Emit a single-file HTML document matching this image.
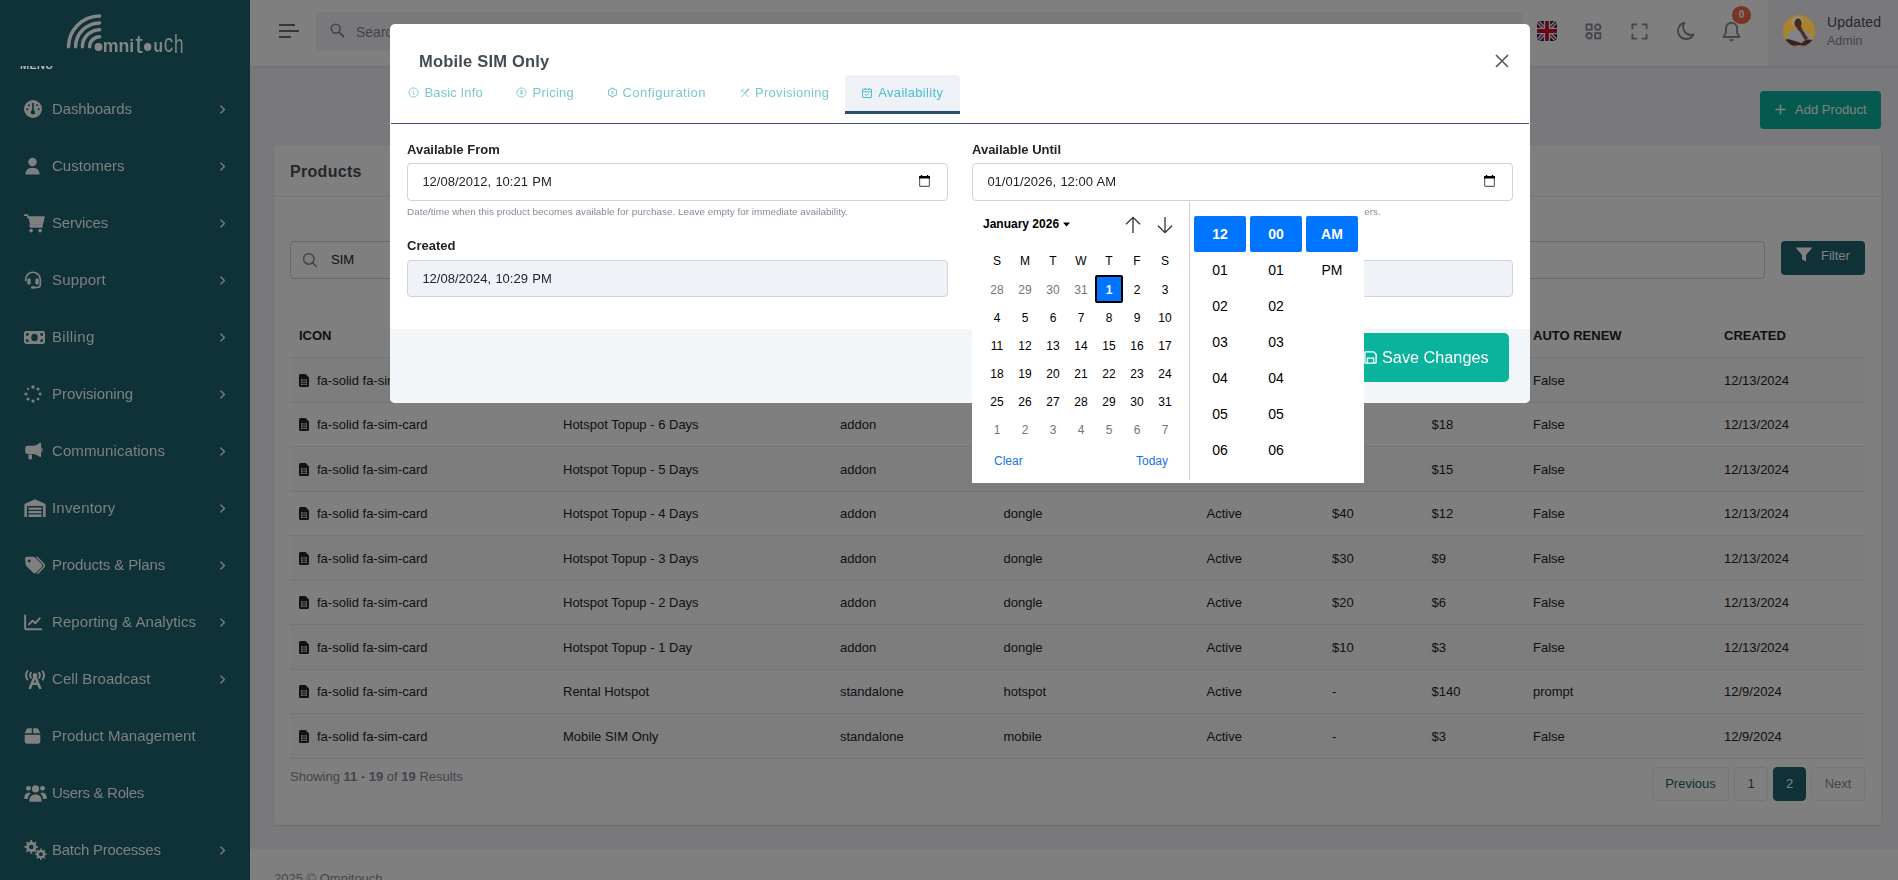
<!DOCTYPE html>
<html lang="en"><head><meta charset="utf-8"><title>Products | Omnitouch</title>
<style>
*{box-sizing:border-box}
html,body{margin:0;padding:0}
body{width:1898px;height:880px;overflow:hidden;position:relative;background:#f3f3f9;font-family:"Liberation Sans",sans-serif;font-size:13px;color:#212529;line-height:1.500}
.abs{position:absolute;white-space:nowrap}
#side{position:absolute;left:0;top:0;width:250px;height:880px;background:#0e3238;overflow:hidden;will-change:transform}
.logo{position:absolute;left:55px;top:5px}
.mt{position:absolute;left:20px;top:57.100px;font-size:11px;font-weight:700;color:#b8bebe;letter-spacing:.3px}
.logobox{position:absolute;left:0;top:0;width:250px;height:66px;background:#0e3238}
.mi{position:absolute;left:0;width:250px;height:28px;color:#808080;font-size:15px;line-height:28px}
.mi .ic{position:absolute;left:24px;top:0;width:26px;height:28px;display:flex;align-items:center;justify-content:flex-start}
.mi .ml{position:absolute;left:52px;top:0;letter-spacing:-.05px}
.mi .ch{position:absolute;left:216px;top:0;height:28px;display:flex;align-items:center}
#top{position:absolute;left:250px;top:0;width:1648px;height:66px;background:#fff;box-shadow:0 1px 2px rgba(56,65,74,.15)}
.search{left:316px;top:12px;width:1206px;height:38px;background:#f3f3f9;border-radius:4px}
.badge{left:1732px;top:6.400px;width:19px;height:17.600px;border-radius:9.500px/8.800px;background:#f5694b;color:#fff;font-size:10px;font-weight:700;line-height:17.600px;text-align:center}
.userbg{left:1768px;top:0;width:130px;height:66px;background:#f3f3f9}
.btn-add{left:1760px;top:91px;width:121px;height:38px;background:#0ab39c;border-radius:4px;color:#fff;font-size:13px;line-height:38px}
#card{position:absolute;left:274px;top:145px;width:1607px;height:680px;background:#fff;border-radius:4px;box-shadow:0 1px 2px rgba(56,65,74,.15)}
.ct{left:290px;top:159.500px;font-size:16px;font-weight:700;color:#495057;letter-spacing:.3px}
.chb{left:274px;top:196px;width:1607px;height:1px;background:#e9ebec}
.sinput{left:290px;top:241px;width:1475px;height:38px;border:1px solid #ced4da;border-radius:4px;background:#fff}
.btn-f{left:1781px;top:241px;width:84px;height:34px;background:#1c6470;border-radius:4px;color:#fff;font-size:13px;line-height:29px}
.thead{border-bottom:1px solid #e9ebec}
.th{font-weight:700;font-size:13px;color:#212529}
.tr{left:290px;width:1575px;height:44.500px;border-bottom:1px solid #e9ebec}
.tr.odd{background:rgba(0,0,0,.02)}
.td{font-size:13px;color:#212529}
.pg{top:767px;height:34px;border:1px solid #e9ebec;border-radius:4px;font-size:13px;line-height:32px;text-align:center;color:#1c6470;background:#fff}
#foot{position:absolute;left:250px;top:849px;width:1648px;height:60px;background:#fff}
#bd{position:absolute;left:0;top:0;width:1898px;height:880px;background:rgba(0,0,0,.5)}
#ml{position:absolute;left:0;top:0;width:1898px;height:880px;will-change:transform}
#modal{position:absolute;left:390px;top:24px;width:1140px;height:379px;background:#fff;border-radius:5px;overflow:hidden}
.mtitle{left:419px;top:49px;font-size:16.500px;font-weight:700;color:#434b54;line-height:24px;letter-spacing:.2px}
.tab{top:75px;height:39px;font-size:13px;color:#7cc6d2;line-height:19.500px}
.tab .ti{top:12px}
.tab .tt{top:8px}
.tab.act{background:#eef2f7;border-bottom:3px solid #264f6c;color:#4bbcd2;border-radius:4px 4px 0 0}
.mline{left:391px;top:123px;width:1138px;height:1px;background:#405189}
.lbl{font-weight:700;font-size:13px;color:#212529}
.inp{word-spacing:.7px;height:38px;width:541px;border:1px solid #ced4da;border-radius:4px;background:#fff;font-size:13px;line-height:36px;padding-left:14.400px;color:#212529}
.inp.dis{background:#eff2f7}
.inp svg{position:absolute;right:17.500px;top:11px}
.help{font-size:9.920px;color:#878a99}
.mfoot{left:390px;top:329px;width:1140px;height:74px;background:#f3f6f9;border-radius:0 0 5px 5px}
.btn-save{left:1340px;top:333px;width:169px;height:49px;background:#0ab39c;border-radius:5px;color:#fff;font-size:16.250px;line-height:49px}
#pick{position:absolute;left:972px;top:201px;width:392px;height:282px;background:#fff}
.wd{width:28px;text-align:center;font-size:12px;line-height:28px;color:#000}
.dy{width:28px;height:28px;text-align:center;font-size:12px;line-height:28px;color:#000}
.dy.om{color:#757575}
.dy i{font-style:normal;position:relative;top:1px}
.dy.sel{background:#0075ff;color:#fff;font-weight:700;border:2px solid #000;border-radius:2px;line-height:24px}
.tc{width:52px;height:36px;text-align:center;font-size:14px;line-height:36px;color:#000;border-radius:2px}
.tc.sel{background:#0075ff;color:#fff;font-weight:700}
</style></head><body>
<div id="top"></div>

<svg class="abs" style="left:278px;top:23px" width="22" height="16" viewBox="0 0 22 16"><g fill="none" stroke="#6b6f80" stroke-width="2" stroke-linecap="butt"><path d="M1 2h16M1 8h20M1 14h12"/></g></svg>
<div class="abs search"><svg width="17" height="17" viewBox="0 0 24 24" class="abs" style="left:13px;top:10px"><circle cx="9.500" cy="9.500" r="6.200" fill="none" stroke="#878a99" stroke-width="2.200"/><path d="M14.200 14.200l6.300 6.300" stroke="#878a99" stroke-width="2.600" stroke-linecap="round"/></svg><span class="abs" style="left:40px;top:9.500px;font-size:14px;color:#878a99">Search...</span></div>
<svg class="abs" style="left:1537px;top:21px;border-radius:4px" width="20" height="20" viewBox="0 0 20 20"><rect width="20" height="20" fill="#012169"/><path d="M0 0l20 20M20 0L0 20" stroke="#fff" stroke-width="4"/><path d="M0 0l20 20M20 0L0 20" stroke="#c8102e" stroke-width="1.500"/><path d="M10 0v20M0 10h20" stroke="#fff" stroke-width="6.400"/><path d="M10 0v20M0 10h20" stroke="#c8102e" stroke-width="3.800"/></svg>
<svg class="abs" style="left:1584.500px;top:23.200px" width="17" height="17" viewBox="0 0 18 18"><g fill="none" stroke="#878a99" stroke-width="1.900"><rect x="1.500" y="1.500" width="5.600" height="5.600"/><circle cx="13.500" cy="4.300" r="2.900"/><circle cx="4.300" cy="13.500" r="2.900"/><rect x="10.700" y="10.700" width="5.600" height="5.600"/></g></svg>
<svg class="abs" style="left:1630.500px;top:23.200px" width="17" height="17" viewBox="0 0 18 18"><g fill="none" stroke="#878a99" stroke-width="1.900"><path d="M1.500 6.500v-5h5M11.500 1.500h5v5M16.500 11.500v5h-5M6.500 16.500h-5v-5"/></g></svg>
<svg class="abs" style="left:1675px;top:21px" width="20" height="20" viewBox="0 0 20 20"><path d="M9.500 1.800a8.200 8.200 0 1 0 9 11.700A7.800 7.800 0 0 1 9.500 1.800z" fill="none" stroke="#878a99" stroke-width="1.900" stroke-linejoin="round"/></svg>
<svg class="abs" style="left:1722px;top:21px" width="19" height="21" viewBox="0 0 19 21"><path d="M9.500 1.800a5.600 5.600 0 0 0-5.600 5.600v4.600l-2.200 3.200v.8h15.600v-.8l-2.200-3.200V7.400a5.600 5.600 0 0 0-5.600-5.600z" fill="none" stroke="#878a99" stroke-width="1.900" stroke-linejoin="round"/><path d="M7.300 18.200h4.400a2.200 2.200 0 0 1-4.400 0z" fill="#878a99"/></svg>
<div class="abs badge">0</div>
<div class="abs userbg"></div>

<span class="abs" style="left:1827px;top:12px;font-size:14px;color:#495057;letter-spacing:.2px">Updated</span>
<span class="abs" style="left:1827px;top:32px;font-size:12.500px;color:#878a99">Admin</span>

<div class="abs btn-add"><svg class="abs" style="left:15.300px;top:13px" width="11" height="11" viewBox="0 0 11 11"><path d="M5.500 .5v10M.5 5.500h10" stroke="#fff" stroke-width="1.500"/></svg><span class="abs" style="left:35px;top:0">Add Product</span></div>
<div id="card"></div>
<span class="abs ct">Products</span>
<div class="abs chb"></div>
<div class="abs sinput"><svg width="16" height="16" viewBox="0 0 16 16" class="abs" style="left:11px;top:10px"><circle cx="6.800" cy="6.900" r="5.250" fill="none" stroke="#878a99" stroke-width="1.500"/><path d="M10.700 10.900l3.700 3.600" stroke="#878a99" stroke-width="1.700" stroke-linecap="round"/></svg><span class="abs" style="left:40px;top:8px;font-size:13px">SIM</span></div>
<div class="abs btn-f"><svg class="abs" style="left:14px;top:6px" width="18" height="16" viewBox="0 0 18 16"><path d="M.6.500h16.800L11 8v6.500l-4-2V8z" fill="#fff"/></svg><span class="abs" style="left:40px;top:0">Filter</span></div>
<div class="abs thead" style="left:290px;top:313px;width:1575px;height:45px"></div><span class="abs th" style="left:299px;top:326px">ICON</span><span class="abs th" style="left:563px;top:326px">NAME</span><span class="abs th" style="left:840px;top:326px">TYPE</span><span class="abs th" style="left:1003.5px;top:326px">CATEGORY</span><span class="abs th" style="left:1206.5px;top:326px">STATUS</span><span class="abs th" style="left:1332px;top:326px">SETUP</span><span class="abs th" style="left:1431.5px;top:326px">PRICE</span><span class="abs th" style="left:1533px;top:326px">AUTO RENEW</span><span class="abs th" style="left:1724px;top:326px">CREATED</span><div class="abs tr odd" style="top:358.0px"></div><span class="abs td" style="left:299px;top:370.5px"><svg width="10" height="13" viewBox="0 0 10 13" style="vertical-align:-2px;margin-right:8px"><path d="M1.600 0h4.900L10 3.400v8a1.600 1.600 0 0 1-1.600 1.600H1.600A1.600 1.600 0 0 1 0 11.400V1.600A1.600 1.600 0 0 1 1.600 0z" fill="#212529"/><g fill="#fff"><rect x="2" y="5.300" width="6" height="1.300"/><rect x="2" y="7.500" width="6" height="1.300"/><rect x="2" y="9.700" width="6" height="1.300"/></g><g fill="#212529"><rect x="3.700" y="5" width=".8" height="6.500"/><rect x="5.600" y="5" width=".8" height="6.500"/></g></svg>fa-solid fa-sim-card</span><span class="abs td" style="left:563px;top:370.5px">Hotspot Topup - 7 Days</span><span class="abs td" style="left:840px;top:370.5px">addon</span><span class="abs td" style="left:1003.5px;top:370.5px">dongle</span><span class="abs td" style="left:1206.5px;top:370.5px">Active</span><span class="abs td" style="left:1332px;top:370.5px">$70</span><span class="abs td" style="left:1431.5px;top:370.5px">$21</span><span class="abs td" style="left:1533px;top:370.5px">False</span><span class="abs td" style="left:1724px;top:370.5px">12/13/2024</span><div class="abs tr" style="top:402.5px"></div><span class="abs td" style="left:299px;top:415.0px"><svg width="10" height="13" viewBox="0 0 10 13" style="vertical-align:-2px;margin-right:8px"><path d="M1.600 0h4.900L10 3.400v8a1.600 1.600 0 0 1-1.600 1.600H1.600A1.600 1.600 0 0 1 0 11.400V1.600A1.600 1.600 0 0 1 1.600 0z" fill="#212529"/><g fill="#fff"><rect x="2" y="5.300" width="6" height="1.300"/><rect x="2" y="7.500" width="6" height="1.300"/><rect x="2" y="9.700" width="6" height="1.300"/></g><g fill="#212529"><rect x="3.700" y="5" width=".8" height="6.500"/><rect x="5.600" y="5" width=".8" height="6.500"/></g></svg>fa-solid fa-sim-card</span><span class="abs td" style="left:563px;top:415.0px">Hotspot Topup - 6 Days</span><span class="abs td" style="left:840px;top:415.0px">addon</span><span class="abs td" style="left:1003.5px;top:415.0px">dongle</span><span class="abs td" style="left:1206.5px;top:415.0px">Active</span><span class="abs td" style="left:1332px;top:415.0px">$60</span><span class="abs td" style="left:1431.5px;top:415.0px">$18</span><span class="abs td" style="left:1533px;top:415.0px">False</span><span class="abs td" style="left:1724px;top:415.0px">12/13/2024</span><div class="abs tr odd" style="top:447.0px"></div><span class="abs td" style="left:299px;top:459.5px"><svg width="10" height="13" viewBox="0 0 10 13" style="vertical-align:-2px;margin-right:8px"><path d="M1.600 0h4.900L10 3.400v8a1.600 1.600 0 0 1-1.600 1.600H1.600A1.600 1.600 0 0 1 0 11.400V1.600A1.600 1.600 0 0 1 1.600 0z" fill="#212529"/><g fill="#fff"><rect x="2" y="5.300" width="6" height="1.300"/><rect x="2" y="7.500" width="6" height="1.300"/><rect x="2" y="9.700" width="6" height="1.300"/></g><g fill="#212529"><rect x="3.700" y="5" width=".8" height="6.500"/><rect x="5.600" y="5" width=".8" height="6.500"/></g></svg>fa-solid fa-sim-card</span><span class="abs td" style="left:563px;top:459.5px">Hotspot Topup - 5 Days</span><span class="abs td" style="left:840px;top:459.5px">addon</span><span class="abs td" style="left:1003.5px;top:459.5px">dongle</span><span class="abs td" style="left:1206.5px;top:459.5px">Active</span><span class="abs td" style="left:1332px;top:459.5px">$50</span><span class="abs td" style="left:1431.5px;top:459.5px">$15</span><span class="abs td" style="left:1533px;top:459.5px">False</span><span class="abs td" style="left:1724px;top:459.5px">12/13/2024</span><div class="abs tr" style="top:491.5px"></div><span class="abs td" style="left:299px;top:504.0px"><svg width="10" height="13" viewBox="0 0 10 13" style="vertical-align:-2px;margin-right:8px"><path d="M1.600 0h4.900L10 3.400v8a1.600 1.600 0 0 1-1.600 1.600H1.600A1.600 1.600 0 0 1 0 11.400V1.600A1.600 1.600 0 0 1 1.600 0z" fill="#212529"/><g fill="#fff"><rect x="2" y="5.300" width="6" height="1.300"/><rect x="2" y="7.500" width="6" height="1.300"/><rect x="2" y="9.700" width="6" height="1.300"/></g><g fill="#212529"><rect x="3.700" y="5" width=".8" height="6.500"/><rect x="5.600" y="5" width=".8" height="6.500"/></g></svg>fa-solid fa-sim-card</span><span class="abs td" style="left:563px;top:504.0px">Hotspot Topup - 4 Days</span><span class="abs td" style="left:840px;top:504.0px">addon</span><span class="abs td" style="left:1003.5px;top:504.0px">dongle</span><span class="abs td" style="left:1206.5px;top:504.0px">Active</span><span class="abs td" style="left:1332px;top:504.0px">$40</span><span class="abs td" style="left:1431.5px;top:504.0px">$12</span><span class="abs td" style="left:1533px;top:504.0px">False</span><span class="abs td" style="left:1724px;top:504.0px">12/13/2024</span><div class="abs tr odd" style="top:536.0px"></div><span class="abs td" style="left:299px;top:548.5px"><svg width="10" height="13" viewBox="0 0 10 13" style="vertical-align:-2px;margin-right:8px"><path d="M1.600 0h4.900L10 3.400v8a1.600 1.600 0 0 1-1.600 1.600H1.600A1.600 1.600 0 0 1 0 11.400V1.600A1.600 1.600 0 0 1 1.600 0z" fill="#212529"/><g fill="#fff"><rect x="2" y="5.300" width="6" height="1.300"/><rect x="2" y="7.500" width="6" height="1.300"/><rect x="2" y="9.700" width="6" height="1.300"/></g><g fill="#212529"><rect x="3.700" y="5" width=".8" height="6.500"/><rect x="5.600" y="5" width=".8" height="6.500"/></g></svg>fa-solid fa-sim-card</span><span class="abs td" style="left:563px;top:548.5px">Hotspot Topup - 3 Days</span><span class="abs td" style="left:840px;top:548.5px">addon</span><span class="abs td" style="left:1003.5px;top:548.5px">dongle</span><span class="abs td" style="left:1206.5px;top:548.5px">Active</span><span class="abs td" style="left:1332px;top:548.5px">$30</span><span class="abs td" style="left:1431.5px;top:548.5px">$9</span><span class="abs td" style="left:1533px;top:548.5px">False</span><span class="abs td" style="left:1724px;top:548.5px">12/13/2024</span><div class="abs tr" style="top:580.5px"></div><span class="abs td" style="left:299px;top:593.0px"><svg width="10" height="13" viewBox="0 0 10 13" style="vertical-align:-2px;margin-right:8px"><path d="M1.600 0h4.900L10 3.400v8a1.600 1.600 0 0 1-1.600 1.600H1.600A1.600 1.600 0 0 1 0 11.400V1.600A1.600 1.600 0 0 1 1.600 0z" fill="#212529"/><g fill="#fff"><rect x="2" y="5.300" width="6" height="1.300"/><rect x="2" y="7.500" width="6" height="1.300"/><rect x="2" y="9.700" width="6" height="1.300"/></g><g fill="#212529"><rect x="3.700" y="5" width=".8" height="6.500"/><rect x="5.600" y="5" width=".8" height="6.500"/></g></svg>fa-solid fa-sim-card</span><span class="abs td" style="left:563px;top:593.0px">Hotspot Topup - 2 Days</span><span class="abs td" style="left:840px;top:593.0px">addon</span><span class="abs td" style="left:1003.5px;top:593.0px">dongle</span><span class="abs td" style="left:1206.5px;top:593.0px">Active</span><span class="abs td" style="left:1332px;top:593.0px">$20</span><span class="abs td" style="left:1431.5px;top:593.0px">$6</span><span class="abs td" style="left:1533px;top:593.0px">False</span><span class="abs td" style="left:1724px;top:593.0px">12/13/2024</span><div class="abs tr odd" style="top:625.0px"></div><span class="abs td" style="left:299px;top:637.5px"><svg width="10" height="13" viewBox="0 0 10 13" style="vertical-align:-2px;margin-right:8px"><path d="M1.600 0h4.900L10 3.400v8a1.600 1.600 0 0 1-1.600 1.600H1.600A1.600 1.600 0 0 1 0 11.400V1.600A1.600 1.600 0 0 1 1.600 0z" fill="#212529"/><g fill="#fff"><rect x="2" y="5.300" width="6" height="1.300"/><rect x="2" y="7.500" width="6" height="1.300"/><rect x="2" y="9.700" width="6" height="1.300"/></g><g fill="#212529"><rect x="3.700" y="5" width=".8" height="6.500"/><rect x="5.600" y="5" width=".8" height="6.500"/></g></svg>fa-solid fa-sim-card</span><span class="abs td" style="left:563px;top:637.5px">Hotspot Topup - 1 Day</span><span class="abs td" style="left:840px;top:637.5px">addon</span><span class="abs td" style="left:1003.5px;top:637.5px">dongle</span><span class="abs td" style="left:1206.5px;top:637.5px">Active</span><span class="abs td" style="left:1332px;top:637.5px">$10</span><span class="abs td" style="left:1431.5px;top:637.5px">$3</span><span class="abs td" style="left:1533px;top:637.5px">False</span><span class="abs td" style="left:1724px;top:637.5px">12/13/2024</span><div class="abs tr" style="top:669.5px"></div><span class="abs td" style="left:299px;top:682.0px"><svg width="10" height="13" viewBox="0 0 10 13" style="vertical-align:-2px;margin-right:8px"><path d="M1.600 0h4.900L10 3.400v8a1.600 1.600 0 0 1-1.600 1.600H1.600A1.600 1.600 0 0 1 0 11.400V1.600A1.600 1.600 0 0 1 1.600 0z" fill="#212529"/><g fill="#fff"><rect x="2" y="5.300" width="6" height="1.300"/><rect x="2" y="7.500" width="6" height="1.300"/><rect x="2" y="9.700" width="6" height="1.300"/></g><g fill="#212529"><rect x="3.700" y="5" width=".8" height="6.500"/><rect x="5.600" y="5" width=".8" height="6.500"/></g></svg>fa-solid fa-sim-card</span><span class="abs td" style="left:563px;top:682.0px">Rental Hotspot</span><span class="abs td" style="left:840px;top:682.0px">standalone</span><span class="abs td" style="left:1003.5px;top:682.0px">hotspot</span><span class="abs td" style="left:1206.5px;top:682.0px">Active</span><span class="abs td" style="left:1332px;top:682.0px">-</span><span class="abs td" style="left:1431.5px;top:682.0px">$140</span><span class="abs td" style="left:1533px;top:682.0px">prompt</span><span class="abs td" style="left:1724px;top:682.0px">12/9/2024</span><div class="abs tr odd" style="top:714.0px"></div><span class="abs td" style="left:299px;top:726.5px"><svg width="10" height="13" viewBox="0 0 10 13" style="vertical-align:-2px;margin-right:8px"><path d="M1.600 0h4.900L10 3.400v8a1.600 1.600 0 0 1-1.600 1.600H1.600A1.600 1.600 0 0 1 0 11.400V1.600A1.600 1.600 0 0 1 1.600 0z" fill="#212529"/><g fill="#fff"><rect x="2" y="5.300" width="6" height="1.300"/><rect x="2" y="7.500" width="6" height="1.300"/><rect x="2" y="9.700" width="6" height="1.300"/></g><g fill="#212529"><rect x="3.700" y="5" width=".8" height="6.500"/><rect x="5.600" y="5" width=".8" height="6.500"/></g></svg>fa-solid fa-sim-card</span><span class="abs td" style="left:563px;top:726.5px">Mobile SIM Only</span><span class="abs td" style="left:840px;top:726.5px">standalone</span><span class="abs td" style="left:1003.5px;top:726.5px">mobile</span><span class="abs td" style="left:1206.5px;top:726.5px">Active</span><span class="abs td" style="left:1332px;top:726.5px">-</span><span class="abs td" style="left:1431.5px;top:726.5px">$3</span><span class="abs td" style="left:1533px;top:726.5px">False</span><span class="abs td" style="left:1724px;top:726.5px">12/9/2024</span>
<span class="abs" style="left:290px;top:766.700px;font-size:13px;color:#878a99">Showing <b>11 - 19</b> of <b>19</b> Results</span>
<span class="abs pg" style="left:1652px;width:77px">Previous</span>
<span class="abs pg" style="left:1734.400px;width:33.400px">1</span>
<span class="abs pg" style="left:1773px;width:33px;background:#1c6470;color:#fff;border-color:#1c6470">2</span>
<span class="abs pg" style="left:1811px;width:54px;color:#878a99">Next</span>
<div id="foot"><span class="abs" style="left:24px;top:20px;font-size:13px;color:#8b8f9c">2025 © Omnitouch.</span></div>
<div id="bd"></div>
<div id="side">
<span class="mt">MENU</span>
<div class="mi" style="top:95px"><span class="ic"><svg viewBox="0 0 24 24" width="18" height="18" ><circle cx="12" cy="12" r="12" fill="#808080"/>
<g fill="#0e3238"><rect x="10.9" y="3.6" width="2.2" height="12" rx="1.1"/><circle cx="12" cy="16.3" r="2.9"/>
<circle cx="6.6" cy="7" r="1.4"/><circle cx="17.4" cy="7" r="1.4"/><circle cx="4.4" cy="12.4" r="1.4"/><circle cx="19.6" cy="12.4" r="1.4"/></g></svg></span><span class="ml" style="letter-spacing:-0.11px">Dashboards</span><span class="ch"><svg viewBox="0 0 24 24" width="13" height="13" ><path d="M9 5.500l6.500 6.500L9 18.500" fill="none" stroke="#808080" stroke-width="2.400" stroke-linecap="round" stroke-linejoin="round"/></svg></span></div>
<div class="mi" style="top:152px"><span class="ic"><svg viewBox="0 0 24 24" width="17" height="18" ><circle cx="12" cy="6.4" r="6" fill="#808080"/><path d="M2 24c0-5.6 3.6-9.2 8-9.2h4c4.4 0 8 3.6 8 9.2z" fill="#808080"/></svg></span><span class="ml" style="letter-spacing:0.01px">Customers</span><span class="ch"><svg viewBox="0 0 24 24" width="13" height="13" ><path d="M9 5.500l6.500 6.500L9 18.500" fill="none" stroke="#808080" stroke-width="2.400" stroke-linecap="round" stroke-linejoin="round"/></svg></span></div>
<div class="mi" style="top:209px"><span class="ic"><svg viewBox="0 0 26 24" width="21" height="19" ><path d="M0.5 1.5h3.6l0.7 2.6h20l-2.6 10H7.6l0.5 2.2h14.2" fill="none" stroke="#808080" stroke-width="2.3" stroke-linejoin="round" stroke-linecap="round"/><path d="M5.2 4.6h19l-2.3 8.6H7.4z" fill="#808080"/><circle cx="8.6" cy="21" r="2.3" fill="#808080"/><circle cx="20" cy="21" r="2.3" fill="#808080"/></svg></span><span class="ml" style="letter-spacing:-0.19px">Services</span><span class="ch"><svg viewBox="0 0 24 24" width="13" height="13" ><path d="M9 5.500l6.500 6.500L9 18.500" fill="none" stroke="#808080" stroke-width="2.400" stroke-linecap="round" stroke-linejoin="round"/></svg></span></div>
<div class="mi" style="top:266px"><span class="ic"><svg viewBox="0 0 24 24" width="18" height="18" ><path d="M2.2 13V11.5a9.8 9.8 0 0 1 19.6 0v6.3a4.2 4.2 0 0 1-4.2 4.2H12" fill="none" stroke="#808080" stroke-width="2.2" stroke-linecap="round"/><rect x="4.3" y="9.8" width="4.6" height="8.4" rx="2.2" fill="#808080"/><rect x="15.1" y="9.8" width="4.6" height="8.4" rx="2.2" fill="#808080"/><rect x="9.3" y="20.2" width="5.4" height="3.4" rx="1.7" fill="#808080"/></svg></span><span class="ml" style="letter-spacing:0.20px">Support</span><span class="ch"><svg viewBox="0 0 24 24" width="13" height="13" ><path d="M9 5.500l6.500 6.500L9 18.500" fill="none" stroke="#808080" stroke-width="2.400" stroke-linecap="round" stroke-linejoin="round"/></svg></span></div>
<div class="mi" style="top:323px"><span class="ic"><svg viewBox="0 0 26 18" width="21" height="15" ><rect x="0" y="1" width="26" height="16" rx="2.6" fill="#808080"/><g fill="#0e3238"><ellipse cx="13" cy="9" rx="4" ry="4.6"/><path d="M2.6 3.6h3.6a3.6 3.6 0 0 1-3.6 3.6zM23.4 3.6h-3.6a3.6 3.6 0 0 0 3.6 3.6zM2.6 14.4h3.6a3.6 3.6 0 0 0-3.6-3.6zM23.4 14.4h-3.6a3.6 3.6 0 0 1 3.6-3.6z"/></g></svg></span><span class="ml" style="letter-spacing:0.37px">Billing</span><span class="ch"><svg viewBox="0 0 24 24" width="13" height="13" ><path d="M9 5.500l6.500 6.500L9 18.500" fill="none" stroke="#808080" stroke-width="2.400" stroke-linecap="round" stroke-linejoin="round"/></svg></span></div>
<div class="mi" style="top:380px"><span class="ic"><svg viewBox="0 0 24 24" width="18" height="18" ><g fill="#808080"><circle cx="12" cy="2.6" r="2.3"/><circle cx="18.7" cy="5.3" r="2.1"/><circle cx="21.4" cy="12" r="1.9"/><circle cx="18.7" cy="18.7" r="1.8"/><circle cx="12" cy="21.4" r="2.1"/><circle cx="5.3" cy="18.7" r="2.1"/><circle cx="2.6" cy="12" r="2.1"/><circle cx="5.3" cy="5.3" r="1.5"/></g></svg></span><span class="ml" style="letter-spacing:-0.05px">Provisioning</span><span class="ch"><svg viewBox="0 0 24 24" width="13" height="13" ><path d="M9 5.500l6.500 6.500L9 18.500" fill="none" stroke="#808080" stroke-width="2.400" stroke-linecap="round" stroke-linejoin="round"/></svg></span></div>
<div class="mi" style="top:437px"><span class="ic"><svg viewBox="0 0 24 24" width="19" height="18" ><g fill="#808080"><path d="M20 1.2c.9-.6 2.2 0 2.2 1.2v16.2c0 1.2-1.300 1.800-2.200 1.200-2.400-2.200-5.400-3.600-8.800-3.900H4.000A3.000 3.000 0 0 1 1.000 12.900V8.100A3.000 3.000 0 0 1 4.000 5.100h7.200c3.400-.3 6.400-1.700 8.800-3.900z"/><path d="M5.200 16.600h4.800v5.000a1.600 1.600 0 0 1-1.600 1.600H6.800a1.600 1.600 0 0 1-1.600-1.600z"/><rect x="22.4" y="8" width="1.6" height="5" rx=".8"/></g></svg></span><span class="ml" style="letter-spacing:0.10px">Communications</span><span class="ch"><svg viewBox="0 0 24 24" width="13" height="13" ><path d="M9 5.500l6.500 6.500L9 18.500" fill="none" stroke="#808080" stroke-width="2.400" stroke-linecap="round" stroke-linejoin="round"/></svg></span></div>
<div class="mi" style="top:494px"><span class="ic"><svg viewBox="0 0 26 22" width="22" height="18" ><path d="M0 22V7.4a2 2 0 0 1 1.300-1.900L12.200.6a2.200 2.200 0 0 1 1.600 0l10.900 4.900A2 2 0 0 1 26 7.400V22h-3.200V9.800a1.200 1.200 0 0 0-1.200-1.200H4.400a1.200 1.200 0 0 0-1.200 1.200V22z" fill="#808080"/><g fill="#808080"><rect x="5" y="10.400" width="16" height="2.800"/><rect x="5" y="14.600" width="16" height="2.800"/><rect x="5" y="18.800" width="16" height="3.200"/></g></svg></span><span class="ml" style="letter-spacing:0.20px">Inventory</span><span class="ch"><svg viewBox="0 0 24 24" width="13" height="13" ><path d="M9 5.500l6.500 6.500L9 18.500" fill="none" stroke="#808080" stroke-width="2.400" stroke-linecap="round" stroke-linejoin="round"/></svg></span></div>
<div class="mi" style="top:551px"><span class="ic"><svg viewBox="0 0 26 24" width="21" height="19" ><path d="M1 3.400A2.400 2.400 0 0 1 3.400 1h8.200c.7 0 1.300.3 1.800.7l8.800 8.800a2.500 2.500 0 0 1 0 3.500l-7.300 7.300a2.500 2.500 0 0 1-3.500 0L2.600 12.500A2.400 2.400 0 0 1 1.900 10.800z" fill="#808080"/><circle cx="6.300" cy="6.300" r="1.800" fill="#0e3238"/><path d="M16.200 1.600l8 8.200a3.400 3.400 0 0 1 0 4.800l-7 7.200" fill="none" stroke="#808080" stroke-width="2" stroke-linecap="round"/></svg></span><span class="ml" style="letter-spacing:-0.12px">Products &amp; Plans</span><span class="ch"><svg viewBox="0 0 24 24" width="13" height="13" ><path d="M9 5.500l6.500 6.500L9 18.500" fill="none" stroke="#808080" stroke-width="2.400" stroke-linecap="round" stroke-linejoin="round"/></svg></span></div>
<div class="mi" style="top:608px"><span class="ic"><svg viewBox="0 0 24 22" width="18" height="17" ><path d="M1.500 1.500V17.500a2.500 2.500 0 0 0 2.500 2.500H23" fill="none" stroke="#808080" stroke-width="2.600" stroke-linecap="round"/><path d="M6.500 13.500l5-5 3.500 3.500 6-6.500" fill="none" stroke="#808080" stroke-width="2.600" stroke-linecap="round" stroke-linejoin="round"/></svg></span><span class="ml" style="letter-spacing:0.07px">Reporting &amp; Analytics</span><span class="ch"><svg viewBox="0 0 24 24" width="13" height="13" ><path d="M9 5.500l6.500 6.500L9 18.500" fill="none" stroke="#808080" stroke-width="2.400" stroke-linecap="round" stroke-linejoin="round"/></svg></span></div>
<div class="mi" style="top:665px"><span class="ic"><svg viewBox="0 0 28 24" width="22" height="19" ><g fill="none" stroke="#808080" stroke-width="2.500" stroke-linecap="round"><path d="M4.300 1.500a9.500 9.500 0 0 0 0 10.500M23.700 1.500a9.500 9.500 0 0 1 0 10.500M8.800 3.600a5.500 5.500 0 0 0 0 6.200M19.200 3.600a5.500 5.500 0 0 1 0 6.200"/><path d="M7.500 23L14 7.500 20.500 23M10 17.500h8" stroke-width="3.300" stroke-linejoin="round"/></g><circle cx="14" cy="6.700" r="2.900" fill="#808080"/></svg></span><span class="ml" style="letter-spacing:0.07px">Cell Broadcast</span><span class="ch"><svg viewBox="0 0 24 24" width="13" height="13" ><path d="M9 5.500l6.500 6.500L9 18.500" fill="none" stroke="#808080" stroke-width="2.400" stroke-linecap="round" stroke-linejoin="round"/></svg></span></div>
<div class="mi" style="top:722px"><span class="ic"><svg viewBox="0 0 24 24" width="17" height="18" ><g fill="#808080"><path d="M3.600 2.600A2.400 2.400 0 0 1 5.700 1.200H11v7H1zM13 1.200h5.300a2.400 2.400 0 0 1 2.100 1.400L23 8.200H13z"/><path d="M1 10.200h22v9.600a3 3 0 0 1-3 3H4a3 3 0 0 1-3-3z"/></g></svg></span><span class="ml" style="letter-spacing:0.01px">Product Management</span></div>
<div class="mi" style="top:779px"><span class="ic"><svg viewBox="0 0 30 24" width="23" height="18" ><g fill="#808080"><circle cx="15" cy="6.500" r="4.800"/><circle cx="5.600" cy="5.800" r="3.300"/><circle cx="24.400" cy="5.800" r="3.300"/><path d="M6.800 22.500c0-5.200 3-8.600 8.200-8.600s8.200 3.400 8.200 8.600c0 .8-.6 1.300-1.300 1.300H8.100c-.7 0-1.300-.5-1.300-1.300zM0 18.600c0-4 2.200-7 6-7 1 0 1.900.2 2.700.6-2.300 1.800-3.700 4.600-3.900 7.700H1.200C.5 19.900 0 19.400 0 18.600zM30 18.600c0-4-2.200-7-6-7-1 0-1.900.2-2.700.6 2.300 1.800 3.700 4.600 3.900 7.700h3.600c.7 0 1.200-.500 1.200-1.300z"/></g></svg></span><span class="ml" style="letter-spacing:-0.30px">Users &amp; Roles</span></div>
<div class="mi" style="top:836px"><span class="ic"><svg viewBox="0 0 30 26" width="23" height="20" ><path d="M18.40 7.66 L18.40 10.34 L16.26 10.04 L15.02 13.04 L16.74 14.34 L14.84 16.24 L13.54 14.52 L10.54 15.76 L10.84 17.90 L8.16 17.90 L8.46 15.76 L5.46 14.52 L4.16 16.24 L2.26 14.34 L3.98 13.04 L2.74 10.04 L0.60 10.34 L0.60 7.66 L2.74 7.96 L3.98 4.96 L2.26 3.66 L4.16 1.76 L5.46 3.48 L8.46 2.24 L8.16 0.10 L10.84 0.10 L10.54 2.24 L13.54 3.48 L14.84 1.76 L16.74 3.66 L15.02 4.96 L16.26 7.96Z" fill="#808080"/><circle cx="9.5" cy="9" r="3" fill="#0e3238"/><path d="M29.51 17.36 L29.51 19.64 L27.71 19.38 L26.66 21.92 L28.12 23.01 L26.51 24.62 L25.42 23.16 L22.88 24.21 L23.14 26.01 L20.86 26.01 L21.12 24.21 L18.58 23.16 L17.49 24.62 L15.88 23.01 L17.34 21.92 L16.29 19.38 L14.49 19.64 L14.49 17.36 L16.29 17.62 L17.34 15.08 L15.88 13.99 L17.49 12.38 L18.58 13.84 L21.12 12.79 L20.86 10.99 L23.14 10.99 L22.88 12.79 L25.42 13.84 L26.51 12.38 L28.12 13.99 L26.66 15.08 L27.71 17.62Z" fill="#808080"/><circle cx="22" cy="18.5" r="2.5" fill="#0e3238"/></svg></span><span class="ml" style="letter-spacing:-0.26px">Batch Processes</span><span class="ch"><svg viewBox="0 0 24 24" width="13" height="13" ><path d="M9 5.500l6.500 6.500L9 18.500" fill="none" stroke="#808080" stroke-width="2.400" stroke-linecap="round" stroke-linejoin="round"/></svg></span></div>

<div class="logobox"><svg width="140" height="58" viewBox="55 5 140 58" class="logo" role="img" aria-label="omnitouch">
<g fill="none" stroke="#858585" stroke-width="3.500" stroke-linecap="round">
<path d="M68.500 46.800A31.500 30.700 0 0 1 99.600 16.100"/>
<path d="M75.600 46.800A24.400 23.900 0 0 1 99.600 22.900"/>
<path d="M82.400 46.800A17.600 17.100 0 0 1 99.600 29.700"/>
<path d="M89.600 46.800A10.400 10 0 0 1 99.600 36.800"/>
</g>
<circle cx="98.400" cy="47" r="3.400" fill="#858585"/><circle cx="147.700" cy="46.600" r="3.200" fill="#858585"/>
<g font-family="'Liberation Sans',sans-serif" fill="#858585">
<text x="93.900" y="51.150" font-size="15.200" font-weight="700" textLength="9" lengthAdjust="spacingAndGlyphs">o</text><text x="102.700" y="52" font-size="18.500" font-weight="700" textLength="31.500" lengthAdjust="spacingAndGlyphs">mni</text>
<text x="135.300" y="52.500" font-size="25" textLength="7.500" lengthAdjust="spacingAndGlyphs">t</text>
<text x="143.500" y="50.500" font-size="14.200" font-weight="700" textLength="8.400" lengthAdjust="spacingAndGlyphs">o</text><text x="153.600" y="51.500" font-size="18.500" font-weight="700" textLength="9.500" lengthAdjust="spacingAndGlyphs">u</text>
<text x="163.800" y="52" font-size="26" textLength="9.500" lengthAdjust="spacingAndGlyphs">c</text>
<text x="174" y="52.500" font-size="25" textLength="9.500" lengthAdjust="spacingAndGlyphs">h</text>
</g>
</svg></div>
</div>
<svg class="abs" style="left:1783px;top:15px" width="32" height="32" viewBox="0 0 32 32"><defs><clipPath id="av"><circle cx="16" cy="16" r="16"/></clipPath></defs><g clip-path="url(#av)"><rect width="32" height="32" fill="#aa822e"/><ellipse cx="14.400" cy="6.400" rx="6.200" ry="5.100" fill="#9c8e72"/><ellipse cx="15.100" cy="8.300" rx="3.600" ry="4.700" fill="#452b1e"/><path d="M3.600 26c.2-5.500 1.400-8.600 5-9.800l3.600-2.600 3 1.400 3.600-1 4.200 2.200c3.600 1.200 5 4.300 5.200 9.800L16 31z" fill="#838387"/><circle cx="16.600" cy="13.600" r="2.300" fill="#452b1e"/><path d="M15.600 14.600l2.800-1.500 6.600 10.400-2.800 2z" fill="#4a2f22"/><path d="M2.800 24.600c2-.6 4-.4 6 .5l9.400 3 4.600-3c2-.9 4.200-.9 6.200-.2l1.500 4.600c-3.500 3-8.500 4.500-14.500 4.500S5 32.500 1.500 29.500z" fill="#3a231b"/><path d="M17.300 25.400l1.700-.3.500 2.800-1.700.4z" fill="#838387"/><path d="M9 31.200c4-1.200 10-1.200 14 0l-2 2H11z" fill="#7e7e82"/></g></svg>
<div id="ml"><div id="modal"></div>
<span class="abs mtitle">Mobile SIM Only</span>
<svg class="abs" style="left:1495px;top:54px" width="14" height="14" viewBox="0 0 14 14"><path d="M1 1l12 12M13 1L1 13" stroke="#555" stroke-width="1.600"/></svg>

<span class="abs tab" style="left:391px;width:108.500px"><svg class="abs ti" style="left:17px" width="11" height="11" viewBox="0 0 24 24"><circle cx="12" cy="12" r="10" fill="none" stroke="#7cc6d2" stroke-width="2"/><rect x="11" y="11" width="2" height="6" fill="#7cc6d2"/><rect x="11" y="7" width="2" height="2" fill="#7cc6d2"/></svg><span class="abs tt" style="left:33.500px;letter-spacing:.12px">Basic Info</span></span>
<span class="abs tab" style="left:499.500px;width:90px"><svg class="abs ti" style="left:16.700px" width="11" height="11" viewBox="0 0 24 24"><circle cx="12" cy="12" r="10" fill="none" stroke="#7cc6d2" stroke-width="2"/><path d="M8.500 14.500h5a1.500 1.500 0 0 0 0-3h-3a1.500 1.500 0 0 1 0-3h5M12 6v2.500M12 15.500V18" fill="none" stroke="#7cc6d2" stroke-width="1.800"/></svg><span class="abs tt" style="left:33.100px;letter-spacing:.24px">Pricing</span></span>
<span class="abs tab" style="left:589.500px;width:132px"><svg class="abs ti" style="left:17px" width="11" height="11" viewBox="0 0 24 24"><path d="M12.00 1.70Q15.80 5.42 20.92 6.85Q19.60 12.00 20.92 17.15Q15.80 18.58 12.00 22.30Q8.20 18.58 3.08 17.15Q4.40 12.00 3.08 6.85Q8.20 5.42 12.00 1.70Z" fill="none" stroke="#7cc6d2" stroke-width="2.300" stroke-linejoin="round"/><circle cx="12" cy="12" r="2.600" fill="none" stroke="#7cc6d2" stroke-width="2"/></svg><span class="abs tt" style="left:33px;letter-spacing:.47px">Configuration</span></span>
<span class="abs tab" style="left:721.500px;width:123px"><svg class="abs ti" style="left:18px;top:12.500px" width="10" height="10" viewBox="0 0 24 24"><g fill="none" stroke="#7cc6d2" stroke-linecap="round"><path d="M4.500 5l15.500 16" stroke-width="2.200"/><path d="M2.500 8.500L8 3" stroke-width="2.400"/><path d="M3.500 21L13 11" stroke-width="2.200"/><path d="M14 10l6.500-7" stroke-width="3.800"/></g></svg><span class="abs tt" style="left:33.500px;letter-spacing:.29px">Provisioning</span></span>
<span class="abs tab act" style="left:845px;width:115px"><svg class="abs ti" style="left:16.300px;top:11.500px" width="12" height="12" viewBox="0 0 24 24"><rect x="3" y="4.500" width="18" height="16.500" rx="1" fill="none" stroke="#4bbcd2" stroke-width="2"/><path d="M3 9.500h18M8 2v4M16 2v4" stroke="#4bbcd2" stroke-width="2"/><path d="M8.500 14.500l2.500 2.500 4.500-4.500" fill="none" stroke="#4bbcd2" stroke-width="2"/></svg><span class="abs tt" style="left:33.300px;letter-spacing:.31px">Availability</span></span>

<div class="abs mline"></div>
<span class="abs lbl" style="left:407px;top:140px">Available From</span>
<div class="abs inp" style="left:407px;top:163px">12/08/2012, 10:21 PM<svg width="11" height="12" viewBox="0 0 11 12"><path d="M2.500 0v1.500M8.500 0v1.500" stroke="#000" stroke-width="1.400"/><rect x=".6" y="1.600" width="9.800" height="9.800" rx="1" fill="none" stroke="#000" stroke-opacity=".62" stroke-width="1.150"/><rect x="0" y="1" width="11" height="2.600" rx=".6" fill="#000"/></svg></div>
<span class="abs help" style="left:407px;top:205px">Date/time when this product becomes available for purchase. Leave empty for immediate availability.</span>
<span class="abs lbl" style="left:407px;top:236px">Created</span>
<div class="abs inp dis" style="left:407px;top:260px;height:37px">12/08/2024, 10:29 PM</div>
<span class="abs lbl" style="left:972px;top:140px">Available Until</span>
<div class="abs inp" style="left:972px;top:163px">01/01/2026, 12:00 AM<svg width="11" height="12" viewBox="0 0 11 12"><path d="M2.500 0v1.500M8.500 0v1.500" stroke="#000" stroke-width="1.400"/><rect x=".6" y="1.600" width="9.800" height="9.800" rx="1" fill="none" stroke="#000" stroke-opacity=".62" stroke-width="1.150"/><rect x="0" y="1" width="11" height="2.600" rx=".6" fill="#000"/></svg></div>
<span class="abs help" id="h2" style="left:972px;top:205px;letter-spacing:-.011px">Date/time when this product is no longer available for purchase by new or existing customers.</span>
<span class="abs lbl" style="left:972px;top:236px">Last Modified</span>
<div class="abs inp dis" style="left:972px;top:260px;height:37px">12/08/2024, 10:29 PM</div>
<div class="abs mfoot"></div>
<div class="abs btn-save"><svg class="abs" style="left:23px;top:17px" width="15" height="15" viewBox="0 0 24 24"><path d="M4 3h13l4 4v13a1 1 0 0 1-1 1H4a1 1 0 0 1-1-1V4a1 1 0 0 1 1-1z" fill="none" stroke="#fff" stroke-width="2.200"/><path d="M7 21v-8h10v8" fill="none" stroke="#fff" stroke-width="2.200"/></svg><span class="abs" style="left:42px;top:0">Save Changes</span></div>
</div>
<div id="pick"></div>
<div class="abs" style="left:1189px;top:202px;width:1px;height:278px;background:#cecece"></div>
<span class="abs" style="left:983px;top:215px;font-size:12px;font-weight:700;color:#000;line-height:18px">January 2026</span>
<svg class="abs" style="left:1063px;top:221.500px" width="7" height="5" viewBox="0 0 7 5"><path d="M0 .500h7L3.500 4.500z" fill="#000"/></svg>
<svg class="abs" style="left:1125px;top:216px" width="16" height="18" viewBox="0 0 16 18"><path d="M8 17V1.500M1 8.300L8 1.300l7 7" fill="none" stroke="#333" stroke-width="1.300"/></svg>
<svg class="abs" style="left:1157px;top:216px" width="16" height="18" viewBox="0 0 16 18"><path d="M8 1v15.500M1 9.700l7 7 7-7" fill="none" stroke="#333" stroke-width="1.300"/></svg>
<span class="abs wd" style="left:983px;top:247px">S</span><span class="abs wd" style="left:1011px;top:247px">M</span><span class="abs wd" style="left:1039px;top:247px">T</span><span class="abs wd" style="left:1067px;top:247px">W</span><span class="abs wd" style="left:1095px;top:247px">T</span><span class="abs wd" style="left:1123px;top:247px">F</span><span class="abs wd" style="left:1151px;top:247px">S</span><span class="abs dy om" style="left:983px;top:275px"><i>28</i></span><span class="abs dy om" style="left:1011px;top:275px"><i>29</i></span><span class="abs dy om" style="left:1039px;top:275px"><i>30</i></span><span class="abs dy om" style="left:1067px;top:275px"><i>31</i></span><span class="abs dy sel" style="left:1095px;top:275px"><i>1</i></span><span class="abs dy" style="left:1123px;top:275px"><i>2</i></span><span class="abs dy" style="left:1151px;top:275px"><i>3</i></span><span class="abs dy" style="left:983px;top:303px"><i>4</i></span><span class="abs dy" style="left:1011px;top:303px"><i>5</i></span><span class="abs dy" style="left:1039px;top:303px"><i>6</i></span><span class="abs dy" style="left:1067px;top:303px"><i>7</i></span><span class="abs dy" style="left:1095px;top:303px"><i>8</i></span><span class="abs dy" style="left:1123px;top:303px"><i>9</i></span><span class="abs dy" style="left:1151px;top:303px"><i>10</i></span><span class="abs dy" style="left:983px;top:331px"><i>11</i></span><span class="abs dy" style="left:1011px;top:331px"><i>12</i></span><span class="abs dy" style="left:1039px;top:331px"><i>13</i></span><span class="abs dy" style="left:1067px;top:331px"><i>14</i></span><span class="abs dy" style="left:1095px;top:331px"><i>15</i></span><span class="abs dy" style="left:1123px;top:331px"><i>16</i></span><span class="abs dy" style="left:1151px;top:331px"><i>17</i></span><span class="abs dy" style="left:983px;top:359px"><i>18</i></span><span class="abs dy" style="left:1011px;top:359px"><i>19</i></span><span class="abs dy" style="left:1039px;top:359px"><i>20</i></span><span class="abs dy" style="left:1067px;top:359px"><i>21</i></span><span class="abs dy" style="left:1095px;top:359px"><i>22</i></span><span class="abs dy" style="left:1123px;top:359px"><i>23</i></span><span class="abs dy" style="left:1151px;top:359px"><i>24</i></span><span class="abs dy" style="left:983px;top:387px"><i>25</i></span><span class="abs dy" style="left:1011px;top:387px"><i>26</i></span><span class="abs dy" style="left:1039px;top:387px"><i>27</i></span><span class="abs dy" style="left:1067px;top:387px"><i>28</i></span><span class="abs dy" style="left:1095px;top:387px"><i>29</i></span><span class="abs dy" style="left:1123px;top:387px"><i>30</i></span><span class="abs dy" style="left:1151px;top:387px"><i>31</i></span><span class="abs dy om" style="left:983px;top:415px"><i>1</i></span><span class="abs dy om" style="left:1011px;top:415px"><i>2</i></span><span class="abs dy om" style="left:1039px;top:415px"><i>3</i></span><span class="abs dy om" style="left:1067px;top:415px"><i>4</i></span><span class="abs dy om" style="left:1095px;top:415px"><i>5</i></span><span class="abs dy om" style="left:1123px;top:415px"><i>6</i></span><span class="abs dy om" style="left:1151px;top:415px"><i>7</i></span>
<span class="abs" style="left:994px;top:452px;font-size:12px;line-height:18px;color:#1a73e8">Clear</span>
<span class="abs" style="left:1136px;top:452px;font-size:12px;line-height:18px;color:#1a73e8">Today</span>
<span class="abs tc sel" style="left:1194px;top:216px">12</span><span class="abs tc sel" style="left:1250px;top:216px">00</span><span class="abs tc" style="left:1194px;top:252px">01</span><span class="abs tc" style="left:1250px;top:252px">01</span><span class="abs tc" style="left:1194px;top:288px">02</span><span class="abs tc" style="left:1250px;top:288px">02</span><span class="abs tc" style="left:1194px;top:324px">03</span><span class="abs tc" style="left:1250px;top:324px">03</span><span class="abs tc" style="left:1194px;top:360px">04</span><span class="abs tc" style="left:1250px;top:360px">04</span><span class="abs tc" style="left:1194px;top:396px">05</span><span class="abs tc" style="left:1250px;top:396px">05</span><span class="abs tc" style="left:1194px;top:432px">06</span><span class="abs tc" style="left:1250px;top:432px">06</span><span class="abs tc sel" style="left:1306px;top:216px">AM</span><span class="abs tc" style="left:1306px;top:252px">PM</span>
</body></html>
